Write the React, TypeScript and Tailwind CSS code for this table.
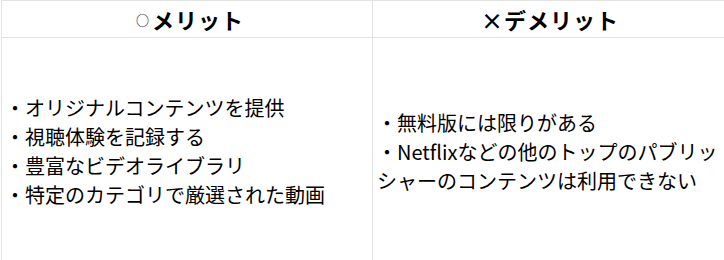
import React from "react";

const font = { fontFamily: '"Noto Sans CJK JP", "Noto Sans", sans-serif' };

export default function App() {
  return (
    <div className="w-[724px] h-[260px] overflow-hidden bg-white" style={font}>
      <div className="ml-[1px] grid w-[727px] grid-cols-[371px_355px] border-t border-l border-[#e3e3e3] text-black">
        <div className="flex h-[37px] items-center justify-center border-r border-b border-[#e3e3e3] text-[22px] font-bold leading-none">
          <span className="text-[13px] font-normal mr-[3px] ml-[6px]">○</span>
          <span className="tracking-[1px]">メリット</span>
        </div>
        <div className="flex h-[37px] items-center justify-center border-r border-b border-[#e3e3e3] text-[22px] font-bold leading-none">
          <span className="tracking-[1px]">×デメリット</span>
        </div>
        <div className="flex h-[227px] items-center border-r border-b border-[#e3e3e3] pl-[3px] text-[20px] leading-[29px] whitespace-nowrap">
          <div>
            <div>・オリジナルコンテンツを提供</div>
            <div>・視聴体験を記録する</div>
            <div>・豊富なビデオライブラリ</div>
            <div>・特定のカテゴリで厳選された動画</div>
          </div>
        </div>
        <div className="flex h-[227px] items-center border-r border-b border-[#e3e3e3] pl-[4px] text-[20px] leading-[29px] whitespace-nowrap">
          <div>
            <div>・無料版には限りがある</div>
            <div>・Netflixなどの他のトップのパブリッ</div>
            <div>シャーのコンテンツは利用できない</div>
          </div>
        </div>
      </div>
    </div>
  );
}
